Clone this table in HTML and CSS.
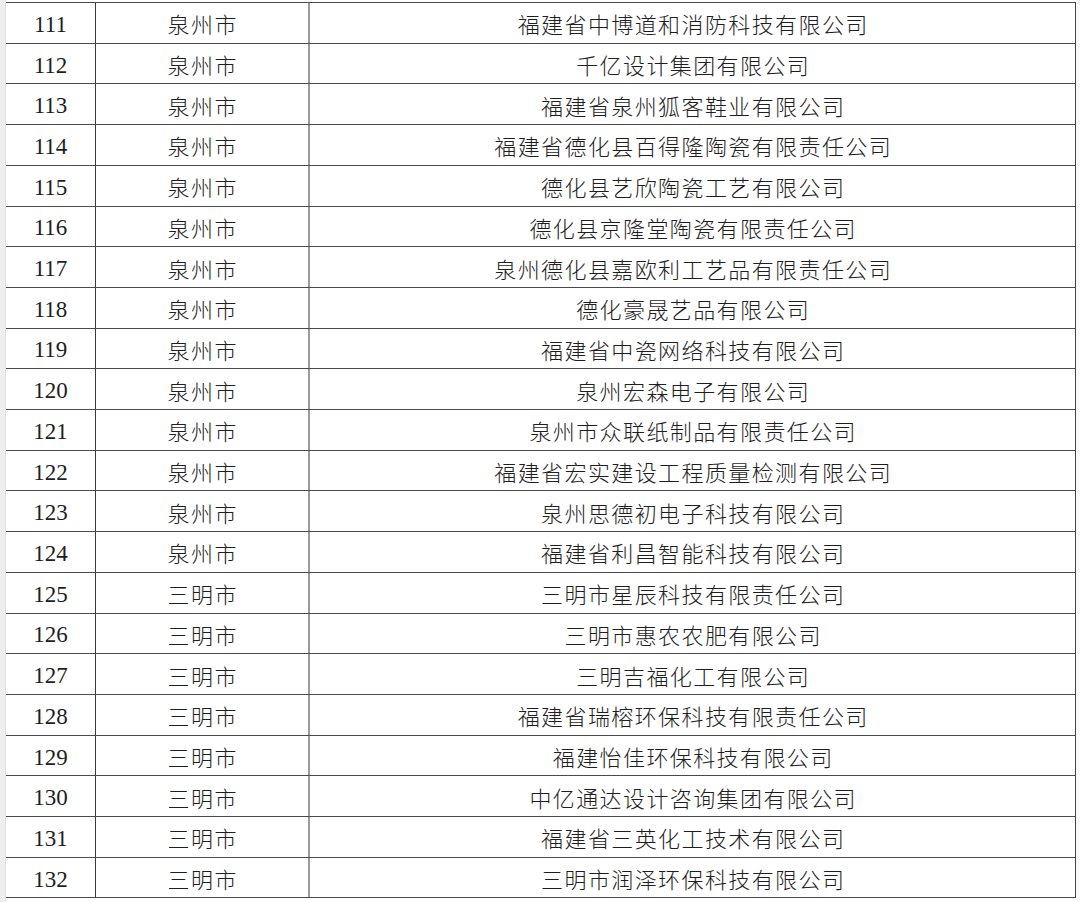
FILE: index.html
```html
<!DOCTYPE html>
<html lang="zh-CN">
<head>
<meta charset="utf-8">
<title>名单</title>
<link rel="stylesheet" href="styles.css">
</head>
<body>
<div class="page">
  <div class="gutter gutter-left"></div>
  <div class="sheet">
    <div class="row"><div class="cell num">111</div><div class="cell city">泉州市</div><div class="cell name">福建省中博道和消防科技有限公司</div></div>
    <div class="row"><div class="cell num">112</div><div class="cell city">泉州市</div><div class="cell name">千亿设计集团有限公司</div></div>
    <div class="row"><div class="cell num">113</div><div class="cell city">泉州市</div><div class="cell name">福建省泉州狐客鞋业有限公司</div></div>
    <div class="row"><div class="cell num">114</div><div class="cell city">泉州市</div><div class="cell name">福建省德化县百得隆陶瓷有限责任公司</div></div>
    <div class="row"><div class="cell num">115</div><div class="cell city">泉州市</div><div class="cell name">德化县艺欣陶瓷工艺有限公司</div></div>
    <div class="row"><div class="cell num">116</div><div class="cell city">泉州市</div><div class="cell name">德化县京隆堂陶瓷有限责任公司</div></div>
    <div class="row"><div class="cell num">117</div><div class="cell city">泉州市</div><div class="cell name">泉州德化县嘉欧利工艺品有限责任公司</div></div>
    <div class="row"><div class="cell num">118</div><div class="cell city">泉州市</div><div class="cell name">德化豪晟艺品有限公司</div></div>
    <div class="row"><div class="cell num">119</div><div class="cell city">泉州市</div><div class="cell name">福建省中瓷网络科技有限公司</div></div>
    <div class="row"><div class="cell num">120</div><div class="cell city">泉州市</div><div class="cell name">泉州宏森电子有限公司</div></div>
    <div class="row"><div class="cell num">121</div><div class="cell city">泉州市</div><div class="cell name">泉州市众联纸制品有限责任公司</div></div>
    <div class="row"><div class="cell num">122</div><div class="cell city">泉州市</div><div class="cell name">福建省宏实建设工程质量检测有限公司</div></div>
    <div class="row"><div class="cell num">123</div><div class="cell city">泉州市</div><div class="cell name">泉州思德初电子科技有限公司</div></div>
    <div class="row"><div class="cell num">124</div><div class="cell city">泉州市</div><div class="cell name">福建省利昌智能科技有限公司</div></div>
    <div class="row"><div class="cell num">125</div><div class="cell city">三明市</div><div class="cell name">三明市星辰科技有限责任公司</div></div>
    <div class="row"><div class="cell num">126</div><div class="cell city">三明市</div><div class="cell name">三明市惠农农肥有限公司</div></div>
    <div class="row"><div class="cell num">127</div><div class="cell city">三明市</div><div class="cell name">三明吉福化工有限公司</div></div>
    <div class="row"><div class="cell num">128</div><div class="cell city">三明市</div><div class="cell name">福建省瑞榕环保科技有限责任公司</div></div>
    <div class="row"><div class="cell num">129</div><div class="cell city">三明市</div><div class="cell name">福建怡佳环保科技有限公司</div></div>
    <div class="row"><div class="cell num">130</div><div class="cell city">三明市</div><div class="cell name">中亿通达设计咨询集团有限公司</div></div>
    <div class="row"><div class="cell num">131</div><div class="cell city">三明市</div><div class="cell name">福建省三英化工技术有限公司</div></div>
    <div class="row"><div class="cell num">132</div><div class="cell city">三明市</div><div class="cell name">三明市润泽环保科技有限公司</div></div>
  </div>
  <div class="gutter gutter-right"></div>
</div>
</body>
</html>
```
FILE: styles.css
```css
html, body {
  margin: 0;
  padding: 0;
  background: #ffffff;
}

.page {
  display: flex;
  width: 1080px;
  height: 902px;
  overflow: hidden;
}

.gutter {
  flex: none;
}

.gutter-left {
  width: 5px;
  background: #eeeeee;
  border-right: 1px solid #e2e2e2;
}

.gutter-right {
  width: 4px;
  background: #fafafa;
}

.sheet {
  flex: none;
  align-self: flex-start;
  width: 1070px;
  margin-top: 2px;
  border-right: 1px solid #444444;
  border-bottom: 1px solid #4a4a4a;
  box-sizing: border-box;
}

.row {
  display: grid;
  grid-template-columns: 90px 214px 1fr;
  height: 40.71px;
  box-sizing: border-box;
  border-top: 1px solid #4a4a4a;
  color: #1e1e1e;
}

.cell {
  display: flex;
  align-items: center;
  justify-content: center;
  white-space: nowrap;
  box-sizing: border-box;
}

.num {
  border-right: 1px solid #3a3a3a;
  font-family: "Liberation Serif", "Times New Roman", serif;
  font-size: 23px;
  padding-top: 4px;
}

.city {
  border-right: 2px solid #9a9a9a;
  font-family: "Noto Sans CJK SC", "Liberation Serif", sans-serif;
  font-size: 22px;
  font-weight: 300;
  letter-spacing: 1.5px;
  padding-left: 1.5px;
  padding-top: 1px;
}

.name {
  font-family: "Noto Sans CJK SC", "Liberation Serif", sans-serif;
  font-size: 22px;
  font-weight: 300;
  letter-spacing: 1.4px;
  padding-left: 1.4px;
  padding-top: 1px;
}
```
